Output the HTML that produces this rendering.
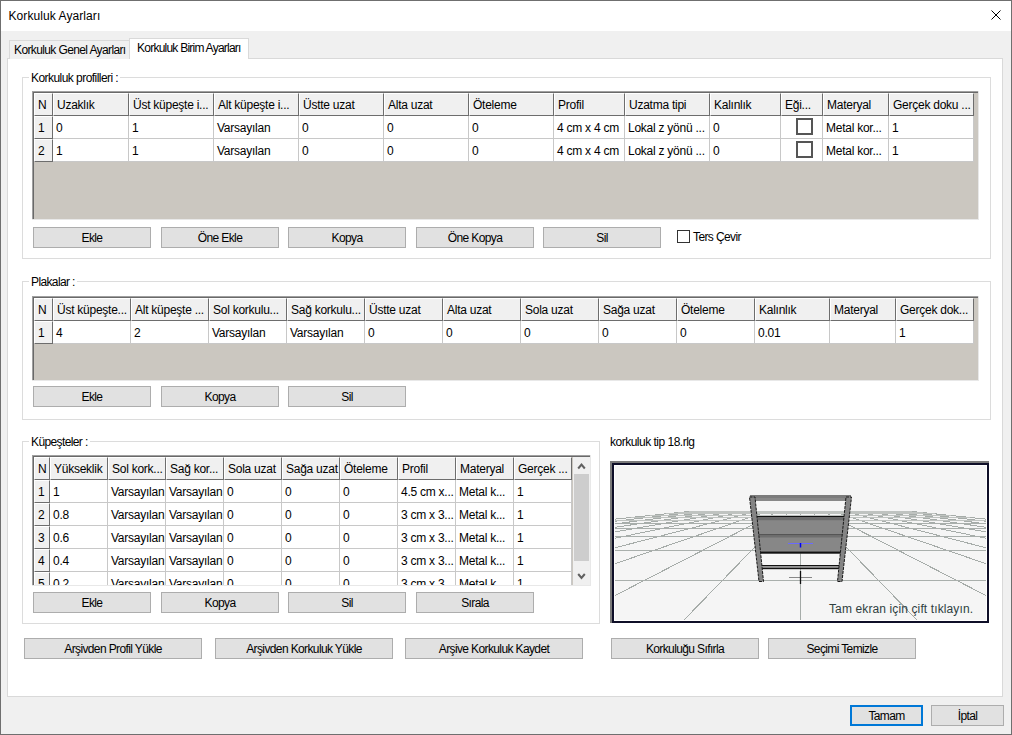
<!DOCTYPE html><html><head><meta charset="utf-8"><style>
html,body{margin:0;padding:0;}
body{width:1012px;height:735px;position:relative;overflow:hidden;background:#f0f0f0;font-family:"Liberation Sans", sans-serif;font-size:12px;color:#000;}
.r{position:absolute;}
.t,.g,.d,.v{position:absolute;white-space:nowrap;line-height:14px;font-size:12px;}
.g{letter-spacing:-0.62px;}
.d{letter-spacing:-0.25px;}
.clip{position:absolute;overflow:hidden;}
</style></head><body>
<div class="r" style="left:0px;top:0px;width:1012px;height:735px;border:1px solid #6f6f6f;box-sizing:border-box;background:#f0f0f0;"></div>
<div class="r" style="left:1px;top:1px;width:1010px;height:30px;background:#fff;"></div>
<div class="t" style="left:8.5px;top:9px;letter-spacing:0.08px;">Korkuluk Ayarları</div>
<svg class="r" style="left:986px;top:5px" width="20" height="20" viewBox="0 0 20 20"><path d="M5.5 5.5 L14.5 14.5 M14.5 5.5 L5.5 14.5" stroke="#000" stroke-width="1" fill="none"/></svg>
<div class="r" style="left:7px;top:58px;width:996px;height:639px;background:#fff;border:1px solid #d9d9d9;box-sizing:border-box;"></div>
<div class="r" style="left:9px;top:40px;width:121px;height:19px;background:#f0f0f0;border:1px solid #d9d9d9;border-bottom:none;box-sizing:border-box;"></div>
<div class="g" style="left:14px;top:43px;">Korkuluk Genel Ayarları</div>
<div class="r" style="left:129px;top:38px;width:120px;height:21px;background:#fff;border:1px solid #d9d9d9;border-bottom:none;box-sizing:border-box;"></div>
<div class="r" style="left:130px;top:58px;width:118px;height:1px;background:#fff;"></div>
<div class="g" style="left:137px;top:41px;letter-spacing:-0.76px;">Korkuluk Birim Ayarları</div>
<div class="r" style="left:22px;top:77px;width:969px;height:182px;border:1px solid #dcdcdc;box-sizing:border-box;"></div>
<div class="r" style="left:29px;top:71px;width:91px;height:13px;background:#fff;"></div>
<div class="g" style="left:31px;top:71px;letter-spacing:-0.55px;">Korkuluk profilleri :</div>
<div class="r" style="left:32px;top:91px;width:947px;height:129px;background:#cbc7c0;"></div>
<div class="r" style="left:978px;top:91px;width:1px;height:129px;background:#e8e8e8;"></div>
<div class="r" style="left:32px;top:219px;width:947px;height:1px;background:#e8e8e8;"></div>
<div class="r" style="left:32px;top:91px;width:946px;height:1px;background:#a0a0a0;"></div>
<div class="r" style="left:32px;top:91px;width:1px;height:128px;background:#a0a0a0;"></div>
<div class="r" style="left:33px;top:92px;width:945px;height:1px;background:#696969;"></div>
<div class="r" style="left:33px;top:92px;width:1px;height:127px;background:#696969;"></div>
<div class="r" style="left:34px;top:93px;width:19px;height:23px;overflow:hidden;box-sizing:border-box;background:#f0f0f0;border-left:1px solid #fff;border-top:1px solid #fff;border-right:1px solid #6d6d6d;border-bottom:1px solid #6d6d6d;"><div class="d" style="left:3px;top:4px;">N</div></div>
<div class="r" style="left:53px;top:93px;width:76px;height:23px;overflow:hidden;box-sizing:border-box;background:#f0f0f0;border-left:1px solid #fff;border-top:1px solid #fff;border-right:1px solid #6d6d6d;border-bottom:1px solid #6d6d6d;"><div class="d" style="left:3px;top:4px;">Uzaklık</div></div>
<div class="r" style="left:129px;top:93px;width:85px;height:23px;overflow:hidden;box-sizing:border-box;background:#f0f0f0;border-left:1px solid #fff;border-top:1px solid #fff;border-right:1px solid #6d6d6d;border-bottom:1px solid #6d6d6d;"><div class="d" style="left:3px;top:4px;">Üst küpeşte i...</div></div>
<div class="r" style="left:214px;top:93px;width:85px;height:23px;overflow:hidden;box-sizing:border-box;background:#f0f0f0;border-left:1px solid #fff;border-top:1px solid #fff;border-right:1px solid #6d6d6d;border-bottom:1px solid #6d6d6d;"><div class="d" style="left:3px;top:4px;">Alt küpeşte i...</div></div>
<div class="r" style="left:299px;top:93px;width:85px;height:23px;overflow:hidden;box-sizing:border-box;background:#f0f0f0;border-left:1px solid #fff;border-top:1px solid #fff;border-right:1px solid #6d6d6d;border-bottom:1px solid #6d6d6d;"><div class="d" style="left:3px;top:4px;">Üstte uzat</div></div>
<div class="r" style="left:384px;top:93px;width:85px;height:23px;overflow:hidden;box-sizing:border-box;background:#f0f0f0;border-left:1px solid #fff;border-top:1px solid #fff;border-right:1px solid #6d6d6d;border-bottom:1px solid #6d6d6d;"><div class="d" style="left:3px;top:4px;">Alta uzat</div></div>
<div class="r" style="left:469px;top:93px;width:85px;height:23px;overflow:hidden;box-sizing:border-box;background:#f0f0f0;border-left:1px solid #fff;border-top:1px solid #fff;border-right:1px solid #6d6d6d;border-bottom:1px solid #6d6d6d;"><div class="d" style="left:3px;top:4px;">Öteleme</div></div>
<div class="r" style="left:554px;top:93px;width:71px;height:23px;overflow:hidden;box-sizing:border-box;background:#f0f0f0;border-left:1px solid #fff;border-top:1px solid #fff;border-right:1px solid #6d6d6d;border-bottom:1px solid #6d6d6d;"><div class="d" style="left:3px;top:4px;">Profil</div></div>
<div class="r" style="left:625px;top:93px;width:85px;height:23px;overflow:hidden;box-sizing:border-box;background:#f0f0f0;border-left:1px solid #fff;border-top:1px solid #fff;border-right:1px solid #6d6d6d;border-bottom:1px solid #6d6d6d;"><div class="d" style="left:3px;top:4px;">Uzatma tipi</div></div>
<div class="r" style="left:710px;top:93px;width:71px;height:23px;overflow:hidden;box-sizing:border-box;background:#f0f0f0;border-left:1px solid #fff;border-top:1px solid #fff;border-right:1px solid #6d6d6d;border-bottom:1px solid #6d6d6d;"><div class="d" style="left:3px;top:4px;">Kalınlık</div></div>
<div class="r" style="left:781px;top:93px;width:42px;height:23px;overflow:hidden;box-sizing:border-box;background:#f0f0f0;border-left:1px solid #fff;border-top:1px solid #fff;border-right:1px solid #6d6d6d;border-bottom:1px solid #6d6d6d;"><div class="d" style="left:3px;top:4px;">Eği...</div></div>
<div class="r" style="left:823px;top:93px;width:66px;height:23px;overflow:hidden;box-sizing:border-box;background:#f0f0f0;border-left:1px solid #fff;border-top:1px solid #fff;border-right:1px solid #6d6d6d;border-bottom:1px solid #6d6d6d;"><div class="d" style="left:3px;top:4px;">Materyal</div></div>
<div class="r" style="left:889px;top:93px;width:85px;height:23px;overflow:hidden;box-sizing:border-box;background:#f0f0f0;border-left:1px solid #fff;border-top:1px solid #fff;border-right:1px solid #6d6d6d;border-bottom:1px solid #6d6d6d;"><div class="d" style="left:3px;top:4px;">Gerçek doku ...</div></div>
<div class="r" style="left:34px;top:116px;width:19px;height:23px;overflow:hidden;box-sizing:border-box;background:#f0f0f0;border-left:1px solid #fff;border-top:1px solid #fff;border-right:1px solid #6d6d6d;border-bottom:1px solid #6d6d6d;"><div class="d" style="left:3px;top:4px;">1</div></div>
<div class="r" style="left:53px;top:116px;width:76px;height:23px;overflow:hidden;box-sizing:border-box;background:#fff;border-right:1px solid #c8c8c8;border-bottom:1px solid #c8c8c8;"><div class="d" style="left:3px;top:5px;">0</div></div>
<div class="r" style="left:129px;top:116px;width:85px;height:23px;overflow:hidden;box-sizing:border-box;background:#fff;border-right:1px solid #c8c8c8;border-bottom:1px solid #c8c8c8;"><div class="d" style="left:3px;top:5px;">1</div></div>
<div class="r" style="left:214px;top:116px;width:85px;height:23px;overflow:hidden;box-sizing:border-box;background:#fff;border-right:1px solid #c8c8c8;border-bottom:1px solid #c8c8c8;"><div class="d" style="left:3px;top:5px;">Varsayılan</div></div>
<div class="r" style="left:299px;top:116px;width:85px;height:23px;overflow:hidden;box-sizing:border-box;background:#fff;border-right:1px solid #c8c8c8;border-bottom:1px solid #c8c8c8;"><div class="d" style="left:3px;top:5px;">0</div></div>
<div class="r" style="left:384px;top:116px;width:85px;height:23px;overflow:hidden;box-sizing:border-box;background:#fff;border-right:1px solid #c8c8c8;border-bottom:1px solid #c8c8c8;"><div class="d" style="left:3px;top:5px;">0</div></div>
<div class="r" style="left:469px;top:116px;width:85px;height:23px;overflow:hidden;box-sizing:border-box;background:#fff;border-right:1px solid #c8c8c8;border-bottom:1px solid #c8c8c8;"><div class="d" style="left:3px;top:5px;">0</div></div>
<div class="r" style="left:554px;top:116px;width:71px;height:23px;overflow:hidden;box-sizing:border-box;background:#fff;border-right:1px solid #c8c8c8;border-bottom:1px solid #c8c8c8;"><div class="d" style="left:3px;top:5px;">4 cm x 4 cm</div></div>
<div class="r" style="left:625px;top:116px;width:85px;height:23px;overflow:hidden;box-sizing:border-box;background:#fff;border-right:1px solid #c8c8c8;border-bottom:1px solid #c8c8c8;"><div class="d" style="left:3px;top:5px;">Lokal z yönü ...</div></div>
<div class="r" style="left:710px;top:116px;width:71px;height:23px;overflow:hidden;box-sizing:border-box;background:#fff;border-right:1px solid #c8c8c8;border-bottom:1px solid #c8c8c8;"><div class="d" style="left:3px;top:5px;">0</div></div>
<div class="r" style="left:781px;top:116px;width:42px;height:23px;overflow:hidden;box-sizing:border-box;background:#fff;border-right:1px solid #c8c8c8;border-bottom:1px solid #c8c8c8;"><div class="r" style="left:15px;top:2px;width:17px;height:17px;border:2px solid #555;box-sizing:border-box;background:#fff;"></div></div>
<div class="r" style="left:823px;top:116px;width:66px;height:23px;overflow:hidden;box-sizing:border-box;background:#fff;border-right:1px solid #c8c8c8;border-bottom:1px solid #c8c8c8;"><div class="d" style="left:3px;top:5px;">Metal kor...</div></div>
<div class="r" style="left:889px;top:116px;width:85px;height:23px;overflow:hidden;box-sizing:border-box;background:#fff;border-right:1px solid #c8c8c8;border-bottom:1px solid #c8c8c8;"><div class="d" style="left:3px;top:5px;">1</div></div>
<div class="r" style="left:34px;top:139px;width:19px;height:23px;overflow:hidden;box-sizing:border-box;background:#f0f0f0;border-left:1px solid #fff;border-top:1px solid #fff;border-right:1px solid #6d6d6d;border-bottom:1px solid #6d6d6d;"><div class="d" style="left:3px;top:4px;">2</div></div>
<div class="r" style="left:53px;top:139px;width:76px;height:23px;overflow:hidden;box-sizing:border-box;background:#fff;border-right:1px solid #c8c8c8;border-bottom:1px solid #c8c8c8;"><div class="d" style="left:3px;top:5px;">1</div></div>
<div class="r" style="left:129px;top:139px;width:85px;height:23px;overflow:hidden;box-sizing:border-box;background:#fff;border-right:1px solid #c8c8c8;border-bottom:1px solid #c8c8c8;"><div class="d" style="left:3px;top:5px;">1</div></div>
<div class="r" style="left:214px;top:139px;width:85px;height:23px;overflow:hidden;box-sizing:border-box;background:#fff;border-right:1px solid #c8c8c8;border-bottom:1px solid #c8c8c8;"><div class="d" style="left:3px;top:5px;">Varsayılan</div></div>
<div class="r" style="left:299px;top:139px;width:85px;height:23px;overflow:hidden;box-sizing:border-box;background:#fff;border-right:1px solid #c8c8c8;border-bottom:1px solid #c8c8c8;"><div class="d" style="left:3px;top:5px;">0</div></div>
<div class="r" style="left:384px;top:139px;width:85px;height:23px;overflow:hidden;box-sizing:border-box;background:#fff;border-right:1px solid #c8c8c8;border-bottom:1px solid #c8c8c8;"><div class="d" style="left:3px;top:5px;">0</div></div>
<div class="r" style="left:469px;top:139px;width:85px;height:23px;overflow:hidden;box-sizing:border-box;background:#fff;border-right:1px solid #c8c8c8;border-bottom:1px solid #c8c8c8;"><div class="d" style="left:3px;top:5px;">0</div></div>
<div class="r" style="left:554px;top:139px;width:71px;height:23px;overflow:hidden;box-sizing:border-box;background:#fff;border-right:1px solid #c8c8c8;border-bottom:1px solid #c8c8c8;"><div class="d" style="left:3px;top:5px;">4 cm x 4 cm</div></div>
<div class="r" style="left:625px;top:139px;width:85px;height:23px;overflow:hidden;box-sizing:border-box;background:#fff;border-right:1px solid #c8c8c8;border-bottom:1px solid #c8c8c8;"><div class="d" style="left:3px;top:5px;">Lokal z yönü ...</div></div>
<div class="r" style="left:710px;top:139px;width:71px;height:23px;overflow:hidden;box-sizing:border-box;background:#fff;border-right:1px solid #c8c8c8;border-bottom:1px solid #c8c8c8;"><div class="d" style="left:3px;top:5px;">0</div></div>
<div class="r" style="left:781px;top:139px;width:42px;height:23px;overflow:hidden;box-sizing:border-box;background:#fff;border-right:1px solid #c8c8c8;border-bottom:1px solid #c8c8c8;"><div class="r" style="left:15px;top:2px;width:17px;height:17px;border:2px solid #555;box-sizing:border-box;background:#fff;"></div></div>
<div class="r" style="left:823px;top:139px;width:66px;height:23px;overflow:hidden;box-sizing:border-box;background:#fff;border-right:1px solid #c8c8c8;border-bottom:1px solid #c8c8c8;"><div class="d" style="left:3px;top:5px;">Metal kor...</div></div>
<div class="r" style="left:889px;top:139px;width:85px;height:23px;overflow:hidden;box-sizing:border-box;background:#fff;border-right:1px solid #c8c8c8;border-bottom:1px solid #c8c8c8;"><div class="d" style="left:3px;top:5px;">1</div></div>
<div class="r" style="left:33px;top:227px;width:118px;height:21px;background:#e1e1e1;border:1px solid #adadad;box-sizing:border-box;"></div>
<div class="g" style="left:33px;width:118px;text-align:center;top:231px;">Ekle</div>
<div class="r" style="left:161px;top:227px;width:118px;height:21px;background:#e1e1e1;border:1px solid #adadad;box-sizing:border-box;"></div>
<div class="g" style="left:161px;width:118px;text-align:center;top:231px;">Öne Ekle</div>
<div class="r" style="left:288px;top:227px;width:118px;height:21px;background:#e1e1e1;border:1px solid #adadad;box-sizing:border-box;"></div>
<div class="g" style="left:288px;width:118px;text-align:center;top:231px;">Kopya</div>
<div class="r" style="left:416px;top:227px;width:118px;height:21px;background:#e1e1e1;border:1px solid #adadad;box-sizing:border-box;"></div>
<div class="g" style="left:416px;width:118px;text-align:center;top:231px;">Öne Kopya</div>
<div class="r" style="left:543px;top:227px;width:118px;height:21px;background:#e1e1e1;border:1px solid #adadad;box-sizing:border-box;"></div>
<div class="g" style="left:543px;width:118px;text-align:center;top:231px;">Sil</div>
<div class="r" style="left:677px;top:230px;width:13px;height:13px;border:1px solid #333;box-sizing:border-box;background:#fff;"></div>
<div class="g" style="left:693px;top:230px;">Ters Çevir</div>
<div class="r" style="left:22px;top:281px;width:969px;height:139px;border:1px solid #dcdcdc;box-sizing:border-box;"></div>
<div class="r" style="left:29px;top:275px;width:48px;height:13px;background:#fff;"></div>
<div class="g" style="left:31px;top:275px;">Plakalar :</div>
<div class="r" style="left:32px;top:296px;width:947px;height:85px;background:#cbc7c0;"></div>
<div class="r" style="left:978px;top:296px;width:1px;height:85px;background:#e8e8e8;"></div>
<div class="r" style="left:32px;top:380px;width:947px;height:1px;background:#e8e8e8;"></div>
<div class="r" style="left:32px;top:296px;width:946px;height:1px;background:#a0a0a0;"></div>
<div class="r" style="left:32px;top:296px;width:1px;height:84px;background:#a0a0a0;"></div>
<div class="r" style="left:33px;top:297px;width:945px;height:1px;background:#696969;"></div>
<div class="r" style="left:33px;top:297px;width:1px;height:83px;background:#696969;"></div>
<div class="r" style="left:34px;top:298px;width:19px;height:23px;overflow:hidden;box-sizing:border-box;background:#f0f0f0;border-left:1px solid #fff;border-top:1px solid #fff;border-right:1px solid #6d6d6d;border-bottom:1px solid #6d6d6d;"><div class="d" style="left:3px;top:4px;">N</div></div>
<div class="r" style="left:53px;top:298px;width:78px;height:23px;overflow:hidden;box-sizing:border-box;background:#f0f0f0;border-left:1px solid #fff;border-top:1px solid #fff;border-right:1px solid #6d6d6d;border-bottom:1px solid #6d6d6d;"><div class="d" style="left:3px;top:4px;">Üst küpeşte...</div></div>
<div class="r" style="left:131px;top:298px;width:78px;height:23px;overflow:hidden;box-sizing:border-box;background:#f0f0f0;border-left:1px solid #fff;border-top:1px solid #fff;border-right:1px solid #6d6d6d;border-bottom:1px solid #6d6d6d;"><div class="d" style="left:3px;top:4px;">Alt küpeşte ...</div></div>
<div class="r" style="left:209px;top:298px;width:78px;height:23px;overflow:hidden;box-sizing:border-box;background:#f0f0f0;border-left:1px solid #fff;border-top:1px solid #fff;border-right:1px solid #6d6d6d;border-bottom:1px solid #6d6d6d;"><div class="d" style="left:3px;top:4px;">Sol korkulu...</div></div>
<div class="r" style="left:287px;top:298px;width:78px;height:23px;overflow:hidden;box-sizing:border-box;background:#f0f0f0;border-left:1px solid #fff;border-top:1px solid #fff;border-right:1px solid #6d6d6d;border-bottom:1px solid #6d6d6d;"><div class="d" style="left:3px;top:4px;">Sağ korkulu...</div></div>
<div class="r" style="left:365px;top:298px;width:78px;height:23px;overflow:hidden;box-sizing:border-box;background:#f0f0f0;border-left:1px solid #fff;border-top:1px solid #fff;border-right:1px solid #6d6d6d;border-bottom:1px solid #6d6d6d;"><div class="d" style="left:3px;top:4px;">Üstte uzat</div></div>
<div class="r" style="left:443px;top:298px;width:78px;height:23px;overflow:hidden;box-sizing:border-box;background:#f0f0f0;border-left:1px solid #fff;border-top:1px solid #fff;border-right:1px solid #6d6d6d;border-bottom:1px solid #6d6d6d;"><div class="d" style="left:3px;top:4px;">Alta uzat</div></div>
<div class="r" style="left:521px;top:298px;width:78px;height:23px;overflow:hidden;box-sizing:border-box;background:#f0f0f0;border-left:1px solid #fff;border-top:1px solid #fff;border-right:1px solid #6d6d6d;border-bottom:1px solid #6d6d6d;"><div class="d" style="left:3px;top:4px;">Sola uzat</div></div>
<div class="r" style="left:599px;top:298px;width:78px;height:23px;overflow:hidden;box-sizing:border-box;background:#f0f0f0;border-left:1px solid #fff;border-top:1px solid #fff;border-right:1px solid #6d6d6d;border-bottom:1px solid #6d6d6d;"><div class="d" style="left:3px;top:4px;">Sağa uzat</div></div>
<div class="r" style="left:677px;top:298px;width:78px;height:23px;overflow:hidden;box-sizing:border-box;background:#f0f0f0;border-left:1px solid #fff;border-top:1px solid #fff;border-right:1px solid #6d6d6d;border-bottom:1px solid #6d6d6d;"><div class="d" style="left:3px;top:4px;">Öteleme</div></div>
<div class="r" style="left:755px;top:298px;width:75px;height:23px;overflow:hidden;box-sizing:border-box;background:#f0f0f0;border-left:1px solid #fff;border-top:1px solid #fff;border-right:1px solid #6d6d6d;border-bottom:1px solid #6d6d6d;"><div class="d" style="left:3px;top:4px;">Kalınlık</div></div>
<div class="r" style="left:830px;top:298px;width:66px;height:23px;overflow:hidden;box-sizing:border-box;background:#f0f0f0;border-left:1px solid #fff;border-top:1px solid #fff;border-right:1px solid #6d6d6d;border-bottom:1px solid #6d6d6d;"><div class="d" style="left:3px;top:4px;">Materyal</div></div>
<div class="r" style="left:896px;top:298px;width:78px;height:23px;overflow:hidden;box-sizing:border-box;background:#f0f0f0;border-left:1px solid #fff;border-top:1px solid #fff;border-right:1px solid #6d6d6d;border-bottom:1px solid #6d6d6d;"><div class="d" style="left:3px;top:4px;">Gerçek dok...</div></div>
<div class="r" style="left:34px;top:321px;width:19px;height:23px;overflow:hidden;box-sizing:border-box;background:#f0f0f0;border-left:1px solid #fff;border-top:1px solid #fff;border-right:1px solid #6d6d6d;border-bottom:1px solid #6d6d6d;"><div class="d" style="left:3px;top:4px;">1</div></div>
<div class="r" style="left:53px;top:321px;width:78px;height:23px;overflow:hidden;box-sizing:border-box;background:#fff;border-right:1px solid #c8c8c8;border-bottom:1px solid #c8c8c8;"><div class="d" style="left:3px;top:5px;">4</div></div>
<div class="r" style="left:131px;top:321px;width:78px;height:23px;overflow:hidden;box-sizing:border-box;background:#fff;border-right:1px solid #c8c8c8;border-bottom:1px solid #c8c8c8;"><div class="d" style="left:3px;top:5px;">2</div></div>
<div class="r" style="left:209px;top:321px;width:78px;height:23px;overflow:hidden;box-sizing:border-box;background:#fff;border-right:1px solid #c8c8c8;border-bottom:1px solid #c8c8c8;"><div class="d" style="left:3px;top:5px;">Varsayılan</div></div>
<div class="r" style="left:287px;top:321px;width:78px;height:23px;overflow:hidden;box-sizing:border-box;background:#fff;border-right:1px solid #c8c8c8;border-bottom:1px solid #c8c8c8;"><div class="d" style="left:3px;top:5px;">Varsayılan</div></div>
<div class="r" style="left:365px;top:321px;width:78px;height:23px;overflow:hidden;box-sizing:border-box;background:#fff;border-right:1px solid #c8c8c8;border-bottom:1px solid #c8c8c8;"><div class="d" style="left:3px;top:5px;">0</div></div>
<div class="r" style="left:443px;top:321px;width:78px;height:23px;overflow:hidden;box-sizing:border-box;background:#fff;border-right:1px solid #c8c8c8;border-bottom:1px solid #c8c8c8;"><div class="d" style="left:3px;top:5px;">0</div></div>
<div class="r" style="left:521px;top:321px;width:78px;height:23px;overflow:hidden;box-sizing:border-box;background:#fff;border-right:1px solid #c8c8c8;border-bottom:1px solid #c8c8c8;"><div class="d" style="left:3px;top:5px;">0</div></div>
<div class="r" style="left:599px;top:321px;width:78px;height:23px;overflow:hidden;box-sizing:border-box;background:#fff;border-right:1px solid #c8c8c8;border-bottom:1px solid #c8c8c8;"><div class="d" style="left:3px;top:5px;">0</div></div>
<div class="r" style="left:677px;top:321px;width:78px;height:23px;overflow:hidden;box-sizing:border-box;background:#fff;border-right:1px solid #c8c8c8;border-bottom:1px solid #c8c8c8;"><div class="d" style="left:3px;top:5px;">0</div></div>
<div class="r" style="left:755px;top:321px;width:75px;height:23px;overflow:hidden;box-sizing:border-box;background:#fff;border-right:1px solid #c8c8c8;border-bottom:1px solid #c8c8c8;"><div class="d" style="left:3px;top:5px;">0.01</div></div>
<div class="r" style="left:830px;top:321px;width:66px;height:23px;overflow:hidden;box-sizing:border-box;background:#fff;border-right:1px solid #c8c8c8;border-bottom:1px solid #c8c8c8;"></div>
<div class="r" style="left:896px;top:321px;width:78px;height:23px;overflow:hidden;box-sizing:border-box;background:#fff;border-right:1px solid #c8c8c8;border-bottom:1px solid #c8c8c8;"><div class="d" style="left:3px;top:5px;">1</div></div>
<div class="r" style="left:33px;top:386px;width:118px;height:21px;background:#e1e1e1;border:1px solid #adadad;box-sizing:border-box;"></div>
<div class="g" style="left:33px;width:118px;text-align:center;top:390px;">Ekle</div>
<div class="r" style="left:161px;top:386px;width:118px;height:21px;background:#e1e1e1;border:1px solid #adadad;box-sizing:border-box;"></div>
<div class="g" style="left:161px;width:118px;text-align:center;top:390px;">Kopya</div>
<div class="r" style="left:288px;top:386px;width:118px;height:21px;background:#e1e1e1;border:1px solid #adadad;box-sizing:border-box;"></div>
<div class="g" style="left:288px;width:118px;text-align:center;top:390px;">Sil</div>
<div class="r" style="left:22px;top:441px;width:578px;height:183px;border:1px solid #dcdcdc;box-sizing:border-box;"></div>
<div class="r" style="left:29px;top:435px;width:61px;height:13px;background:#fff;"></div>
<div class="g" style="left:31px;top:435px;">Küpeşteler :</div>
<div class="r" style="left:32px;top:455px;width:559px;height:131px;background:#cbc7c0;"></div>
<div class="r" style="left:590px;top:455px;width:1px;height:131px;background:#e8e8e8;"></div>
<div class="r" style="left:32px;top:585px;width:559px;height:1px;background:#e8e8e8;"></div>
<div class="r" style="left:32px;top:455px;width:558px;height:1px;background:#a0a0a0;"></div>
<div class="r" style="left:32px;top:455px;width:1px;height:130px;background:#a0a0a0;"></div>
<div class="r" style="left:33px;top:456px;width:557px;height:1px;background:#696969;"></div>
<div class="r" style="left:33px;top:456px;width:1px;height:129px;background:#696969;"></div>
<div class="r" style="left:34px;top:457px;width:16px;height:23px;overflow:hidden;box-sizing:border-box;background:#f0f0f0;border-left:1px solid #fff;border-top:1px solid #fff;border-right:1px solid #6d6d6d;border-bottom:1px solid #6d6d6d;"><div class="d" style="left:3px;top:4px;">N</div></div>
<div class="r" style="left:50px;top:457px;width:58px;height:23px;overflow:hidden;box-sizing:border-box;background:#f0f0f0;border-left:1px solid #fff;border-top:1px solid #fff;border-right:1px solid #6d6d6d;border-bottom:1px solid #6d6d6d;"><div class="d" style="left:3px;top:4px;">Yükseklik</div></div>
<div class="r" style="left:108px;top:457px;width:58px;height:23px;overflow:hidden;box-sizing:border-box;background:#f0f0f0;border-left:1px solid #fff;border-top:1px solid #fff;border-right:1px solid #6d6d6d;border-bottom:1px solid #6d6d6d;"><div class="d" style="left:3px;top:4px;">Sol kork...</div></div>
<div class="r" style="left:166px;top:457px;width:58px;height:23px;overflow:hidden;box-sizing:border-box;background:#f0f0f0;border-left:1px solid #fff;border-top:1px solid #fff;border-right:1px solid #6d6d6d;border-bottom:1px solid #6d6d6d;"><div class="d" style="left:3px;top:4px;">Sağ kor...</div></div>
<div class="r" style="left:224px;top:457px;width:58px;height:23px;overflow:hidden;box-sizing:border-box;background:#f0f0f0;border-left:1px solid #fff;border-top:1px solid #fff;border-right:1px solid #6d6d6d;border-bottom:1px solid #6d6d6d;"><div class="d" style="left:3px;top:4px;">Sola uzat</div></div>
<div class="r" style="left:282px;top:457px;width:58px;height:23px;overflow:hidden;box-sizing:border-box;background:#f0f0f0;border-left:1px solid #fff;border-top:1px solid #fff;border-right:1px solid #6d6d6d;border-bottom:1px solid #6d6d6d;"><div class="d" style="left:3px;top:4px;">Sağa uzat</div></div>
<div class="r" style="left:340px;top:457px;width:58px;height:23px;overflow:hidden;box-sizing:border-box;background:#f0f0f0;border-left:1px solid #fff;border-top:1px solid #fff;border-right:1px solid #6d6d6d;border-bottom:1px solid #6d6d6d;"><div class="d" style="left:3px;top:4px;">Öteleme</div></div>
<div class="r" style="left:398px;top:457px;width:58px;height:23px;overflow:hidden;box-sizing:border-box;background:#f0f0f0;border-left:1px solid #fff;border-top:1px solid #fff;border-right:1px solid #6d6d6d;border-bottom:1px solid #6d6d6d;"><div class="d" style="left:3px;top:4px;">Profil</div></div>
<div class="r" style="left:456px;top:457px;width:58px;height:23px;overflow:hidden;box-sizing:border-box;background:#f0f0f0;border-left:1px solid #fff;border-top:1px solid #fff;border-right:1px solid #6d6d6d;border-bottom:1px solid #6d6d6d;"><div class="d" style="left:3px;top:4px;">Materyal</div></div>
<div class="r" style="left:514px;top:457px;width:58px;height:23px;overflow:hidden;box-sizing:border-box;background:#f0f0f0;border-left:1px solid #fff;border-top:1px solid #fff;border-right:1px solid #6d6d6d;border-bottom:1px solid #6d6d6d;"><div class="d" style="left:3px;top:4px;">Gerçek ...</div></div>
<div class="r" style="left:34px;top:480px;width:16px;height:23px;overflow:hidden;box-sizing:border-box;background:#f0f0f0;border-left:1px solid #fff;border-top:1px solid #fff;border-right:1px solid #6d6d6d;border-bottom:1px solid #6d6d6d;"><div class="d" style="left:3px;top:4px;">1</div></div>
<div class="r" style="left:50px;top:480px;width:58px;height:23px;overflow:hidden;box-sizing:border-box;background:#fff;border-right:1px solid #c8c8c8;border-bottom:1px solid #c8c8c8;"><div class="d" style="left:3px;top:5px;">1</div></div>
<div class="r" style="left:108px;top:480px;width:58px;height:23px;overflow:hidden;box-sizing:border-box;background:#fff;border-right:1px solid #c8c8c8;border-bottom:1px solid #c8c8c8;"><div class="d" style="left:3px;top:5px;">Varsayılan</div></div>
<div class="r" style="left:166px;top:480px;width:58px;height:23px;overflow:hidden;box-sizing:border-box;background:#fff;border-right:1px solid #c8c8c8;border-bottom:1px solid #c8c8c8;"><div class="d" style="left:3px;top:5px;">Varsayılan</div></div>
<div class="r" style="left:224px;top:480px;width:58px;height:23px;overflow:hidden;box-sizing:border-box;background:#fff;border-right:1px solid #c8c8c8;border-bottom:1px solid #c8c8c8;"><div class="d" style="left:3px;top:5px;">0</div></div>
<div class="r" style="left:282px;top:480px;width:58px;height:23px;overflow:hidden;box-sizing:border-box;background:#fff;border-right:1px solid #c8c8c8;border-bottom:1px solid #c8c8c8;"><div class="d" style="left:3px;top:5px;">0</div></div>
<div class="r" style="left:340px;top:480px;width:58px;height:23px;overflow:hidden;box-sizing:border-box;background:#fff;border-right:1px solid #c8c8c8;border-bottom:1px solid #c8c8c8;"><div class="d" style="left:3px;top:5px;">0</div></div>
<div class="r" style="left:398px;top:480px;width:58px;height:23px;overflow:hidden;box-sizing:border-box;background:#fff;border-right:1px solid #c8c8c8;border-bottom:1px solid #c8c8c8;"><div class="d" style="left:3px;top:5px;">4.5 cm x...</div></div>
<div class="r" style="left:456px;top:480px;width:58px;height:23px;overflow:hidden;box-sizing:border-box;background:#fff;border-right:1px solid #c8c8c8;border-bottom:1px solid #c8c8c8;"><div class="d" style="left:3px;top:5px;">Metal k...</div></div>
<div class="r" style="left:514px;top:480px;width:58px;height:23px;overflow:hidden;box-sizing:border-box;background:#fff;border-right:1px solid #c8c8c8;border-bottom:1px solid #c8c8c8;"><div class="d" style="left:3px;top:5px;">1</div></div>
<div class="r" style="left:34px;top:503px;width:16px;height:23px;overflow:hidden;box-sizing:border-box;background:#f0f0f0;border-left:1px solid #fff;border-top:1px solid #fff;border-right:1px solid #6d6d6d;border-bottom:1px solid #6d6d6d;"><div class="d" style="left:3px;top:4px;">2</div></div>
<div class="r" style="left:50px;top:503px;width:58px;height:23px;overflow:hidden;box-sizing:border-box;background:#fff;border-right:1px solid #c8c8c8;border-bottom:1px solid #c8c8c8;"><div class="d" style="left:3px;top:5px;">0.8</div></div>
<div class="r" style="left:108px;top:503px;width:58px;height:23px;overflow:hidden;box-sizing:border-box;background:#fff;border-right:1px solid #c8c8c8;border-bottom:1px solid #c8c8c8;"><div class="d" style="left:3px;top:5px;">Varsayılan</div></div>
<div class="r" style="left:166px;top:503px;width:58px;height:23px;overflow:hidden;box-sizing:border-box;background:#fff;border-right:1px solid #c8c8c8;border-bottom:1px solid #c8c8c8;"><div class="d" style="left:3px;top:5px;">Varsayılan</div></div>
<div class="r" style="left:224px;top:503px;width:58px;height:23px;overflow:hidden;box-sizing:border-box;background:#fff;border-right:1px solid #c8c8c8;border-bottom:1px solid #c8c8c8;"><div class="d" style="left:3px;top:5px;">0</div></div>
<div class="r" style="left:282px;top:503px;width:58px;height:23px;overflow:hidden;box-sizing:border-box;background:#fff;border-right:1px solid #c8c8c8;border-bottom:1px solid #c8c8c8;"><div class="d" style="left:3px;top:5px;">0</div></div>
<div class="r" style="left:340px;top:503px;width:58px;height:23px;overflow:hidden;box-sizing:border-box;background:#fff;border-right:1px solid #c8c8c8;border-bottom:1px solid #c8c8c8;"><div class="d" style="left:3px;top:5px;">0</div></div>
<div class="r" style="left:398px;top:503px;width:58px;height:23px;overflow:hidden;box-sizing:border-box;background:#fff;border-right:1px solid #c8c8c8;border-bottom:1px solid #c8c8c8;"><div class="d" style="left:3px;top:5px;">3 cm x 3...</div></div>
<div class="r" style="left:456px;top:503px;width:58px;height:23px;overflow:hidden;box-sizing:border-box;background:#fff;border-right:1px solid #c8c8c8;border-bottom:1px solid #c8c8c8;"><div class="d" style="left:3px;top:5px;">Metal k...</div></div>
<div class="r" style="left:514px;top:503px;width:58px;height:23px;overflow:hidden;box-sizing:border-box;background:#fff;border-right:1px solid #c8c8c8;border-bottom:1px solid #c8c8c8;"><div class="d" style="left:3px;top:5px;">1</div></div>
<div class="r" style="left:34px;top:526px;width:16px;height:23px;overflow:hidden;box-sizing:border-box;background:#f0f0f0;border-left:1px solid #fff;border-top:1px solid #fff;border-right:1px solid #6d6d6d;border-bottom:1px solid #6d6d6d;"><div class="d" style="left:3px;top:4px;">3</div></div>
<div class="r" style="left:50px;top:526px;width:58px;height:23px;overflow:hidden;box-sizing:border-box;background:#fff;border-right:1px solid #c8c8c8;border-bottom:1px solid #c8c8c8;"><div class="d" style="left:3px;top:5px;">0.6</div></div>
<div class="r" style="left:108px;top:526px;width:58px;height:23px;overflow:hidden;box-sizing:border-box;background:#fff;border-right:1px solid #c8c8c8;border-bottom:1px solid #c8c8c8;"><div class="d" style="left:3px;top:5px;">Varsayılan</div></div>
<div class="r" style="left:166px;top:526px;width:58px;height:23px;overflow:hidden;box-sizing:border-box;background:#fff;border-right:1px solid #c8c8c8;border-bottom:1px solid #c8c8c8;"><div class="d" style="left:3px;top:5px;">Varsayılan</div></div>
<div class="r" style="left:224px;top:526px;width:58px;height:23px;overflow:hidden;box-sizing:border-box;background:#fff;border-right:1px solid #c8c8c8;border-bottom:1px solid #c8c8c8;"><div class="d" style="left:3px;top:5px;">0</div></div>
<div class="r" style="left:282px;top:526px;width:58px;height:23px;overflow:hidden;box-sizing:border-box;background:#fff;border-right:1px solid #c8c8c8;border-bottom:1px solid #c8c8c8;"><div class="d" style="left:3px;top:5px;">0</div></div>
<div class="r" style="left:340px;top:526px;width:58px;height:23px;overflow:hidden;box-sizing:border-box;background:#fff;border-right:1px solid #c8c8c8;border-bottom:1px solid #c8c8c8;"><div class="d" style="left:3px;top:5px;">0</div></div>
<div class="r" style="left:398px;top:526px;width:58px;height:23px;overflow:hidden;box-sizing:border-box;background:#fff;border-right:1px solid #c8c8c8;border-bottom:1px solid #c8c8c8;"><div class="d" style="left:3px;top:5px;">3 cm x 3...</div></div>
<div class="r" style="left:456px;top:526px;width:58px;height:23px;overflow:hidden;box-sizing:border-box;background:#fff;border-right:1px solid #c8c8c8;border-bottom:1px solid #c8c8c8;"><div class="d" style="left:3px;top:5px;">Metal k...</div></div>
<div class="r" style="left:514px;top:526px;width:58px;height:23px;overflow:hidden;box-sizing:border-box;background:#fff;border-right:1px solid #c8c8c8;border-bottom:1px solid #c8c8c8;"><div class="d" style="left:3px;top:5px;">1</div></div>
<div class="r" style="left:34px;top:549px;width:16px;height:23px;overflow:hidden;box-sizing:border-box;background:#f0f0f0;border-left:1px solid #fff;border-top:1px solid #fff;border-right:1px solid #6d6d6d;border-bottom:1px solid #6d6d6d;"><div class="d" style="left:3px;top:4px;">4</div></div>
<div class="r" style="left:50px;top:549px;width:58px;height:23px;overflow:hidden;box-sizing:border-box;background:#fff;border-right:1px solid #c8c8c8;border-bottom:1px solid #c8c8c8;"><div class="d" style="left:3px;top:5px;">0.4</div></div>
<div class="r" style="left:108px;top:549px;width:58px;height:23px;overflow:hidden;box-sizing:border-box;background:#fff;border-right:1px solid #c8c8c8;border-bottom:1px solid #c8c8c8;"><div class="d" style="left:3px;top:5px;">Varsayılan</div></div>
<div class="r" style="left:166px;top:549px;width:58px;height:23px;overflow:hidden;box-sizing:border-box;background:#fff;border-right:1px solid #c8c8c8;border-bottom:1px solid #c8c8c8;"><div class="d" style="left:3px;top:5px;">Varsayılan</div></div>
<div class="r" style="left:224px;top:549px;width:58px;height:23px;overflow:hidden;box-sizing:border-box;background:#fff;border-right:1px solid #c8c8c8;border-bottom:1px solid #c8c8c8;"><div class="d" style="left:3px;top:5px;">0</div></div>
<div class="r" style="left:282px;top:549px;width:58px;height:23px;overflow:hidden;box-sizing:border-box;background:#fff;border-right:1px solid #c8c8c8;border-bottom:1px solid #c8c8c8;"><div class="d" style="left:3px;top:5px;">0</div></div>
<div class="r" style="left:340px;top:549px;width:58px;height:23px;overflow:hidden;box-sizing:border-box;background:#fff;border-right:1px solid #c8c8c8;border-bottom:1px solid #c8c8c8;"><div class="d" style="left:3px;top:5px;">0</div></div>
<div class="r" style="left:398px;top:549px;width:58px;height:23px;overflow:hidden;box-sizing:border-box;background:#fff;border-right:1px solid #c8c8c8;border-bottom:1px solid #c8c8c8;"><div class="d" style="left:3px;top:5px;">3 cm x 3...</div></div>
<div class="r" style="left:456px;top:549px;width:58px;height:23px;overflow:hidden;box-sizing:border-box;background:#fff;border-right:1px solid #c8c8c8;border-bottom:1px solid #c8c8c8;"><div class="d" style="left:3px;top:5px;">Metal k...</div></div>
<div class="r" style="left:514px;top:549px;width:58px;height:23px;overflow:hidden;box-sizing:border-box;background:#fff;border-right:1px solid #c8c8c8;border-bottom:1px solid #c8c8c8;"><div class="d" style="left:3px;top:5px;">1</div></div>
<div class="r" style="left:34px;top:572px;width:16px;height:13px;overflow:hidden;box-sizing:border-box;background:#f0f0f0;border-left:1px solid #fff;border-top:1px solid #fff;border-right:1px solid #6d6d6d;"><div class="d" style="left:3px;top:4px;">5</div></div>
<div class="r" style="left:50px;top:572px;width:58px;height:13px;overflow:hidden;box-sizing:border-box;background:#fff;border-right:1px solid #c8c8c8;"><div class="d" style="left:3px;top:5px;">0.2</div></div>
<div class="r" style="left:108px;top:572px;width:58px;height:13px;overflow:hidden;box-sizing:border-box;background:#fff;border-right:1px solid #c8c8c8;"><div class="d" style="left:3px;top:5px;">Varsayılan</div></div>
<div class="r" style="left:166px;top:572px;width:58px;height:13px;overflow:hidden;box-sizing:border-box;background:#fff;border-right:1px solid #c8c8c8;"><div class="d" style="left:3px;top:5px;">Varsayılan</div></div>
<div class="r" style="left:224px;top:572px;width:58px;height:13px;overflow:hidden;box-sizing:border-box;background:#fff;border-right:1px solid #c8c8c8;"><div class="d" style="left:3px;top:5px;">0</div></div>
<div class="r" style="left:282px;top:572px;width:58px;height:13px;overflow:hidden;box-sizing:border-box;background:#fff;border-right:1px solid #c8c8c8;"><div class="d" style="left:3px;top:5px;">0</div></div>
<div class="r" style="left:340px;top:572px;width:58px;height:13px;overflow:hidden;box-sizing:border-box;background:#fff;border-right:1px solid #c8c8c8;"><div class="d" style="left:3px;top:5px;">0</div></div>
<div class="r" style="left:398px;top:572px;width:58px;height:13px;overflow:hidden;box-sizing:border-box;background:#fff;border-right:1px solid #c8c8c8;"><div class="d" style="left:3px;top:5px;">3 cm x 3...</div></div>
<div class="r" style="left:456px;top:572px;width:58px;height:13px;overflow:hidden;box-sizing:border-box;background:#fff;border-right:1px solid #c8c8c8;"><div class="d" style="left:3px;top:5px;">Metal k...</div></div>
<div class="r" style="left:514px;top:572px;width:58px;height:13px;overflow:hidden;box-sizing:border-box;background:#fff;border-right:1px solid #c8c8c8;"><div class="d" style="left:3px;top:5px;">1</div></div>
<div class="r" style="left:573px;top:457px;width:17px;height:128px;background:#f0f0f0;"></div>
<div class="r" style="left:574px;top:474px;width:15px;height:87px;background:#cdcdcd;"></div>
<svg class="r" style="left:573px;top:457px" width="17" height="128"><path d="M5.2 11.5 L8.5 7.5 L11.8 11.5" stroke="#606060" stroke-width="2" fill="none"/><path d="M5.2 117 L8.5 121 L11.8 117" stroke="#606060" stroke-width="2" fill="none"/></svg>
<div class="r" style="left:33px;top:592px;width:118px;height:21px;background:#e1e1e1;border:1px solid #adadad;box-sizing:border-box;"></div>
<div class="g" style="left:33px;width:118px;text-align:center;top:596px;">Ekle</div>
<div class="r" style="left:161px;top:592px;width:118px;height:21px;background:#e1e1e1;border:1px solid #adadad;box-sizing:border-box;"></div>
<div class="g" style="left:161px;width:118px;text-align:center;top:596px;">Kopya</div>
<div class="r" style="left:288px;top:592px;width:118px;height:21px;background:#e1e1e1;border:1px solid #adadad;box-sizing:border-box;"></div>
<div class="g" style="left:288px;width:118px;text-align:center;top:596px;">Sil</div>
<div class="r" style="left:416px;top:592px;width:118px;height:21px;background:#e1e1e1;border:1px solid #adadad;box-sizing:border-box;"></div>
<div class="g" style="left:416px;width:118px;text-align:center;top:596px;">Sırala</div>
<div class="g" style="left:610px;top:435px;letter-spacing:-0.5px;">korkuluk tip 18.rlg</div>
<div class="r" style="left:610px;top:461px;width:379px;height:162px;background:#f5f5f5;"></div>
<svg class="r" style="left:612px;top:463px" width="377" height="160" viewBox="612 463 377 160"><rect x="612" y="463" width="377" height="160" fill="#f5f5f5"/><g stroke="#a6aca9" stroke-width="1" shape-rendering="crispEdges"><line x1="688.73" y1="511.51" x2="-558.90" y2="640"/><line x1="699.91" y1="511.51" x2="-422.96" y2="640"/><line x1="711.08" y1="511.51" x2="-287.02" y2="640"/><line x1="722.26" y1="511.51" x2="-151.08" y2="640"/><line x1="733.44" y1="511.51" x2="-15.14" y2="640"/><line x1="744.62" y1="511.51" x2="120.80" y2="640"/><line x1="755.79" y1="511.51" x2="256.74" y2="640"/><line x1="766.97" y1="511.51" x2="392.68" y2="640"/><line x1="778.15" y1="511.51" x2="528.62" y2="640"/><line x1="789.32" y1="511.51" x2="664.56" y2="640"/><line x1="800.50" y1="511.51" x2="800.50" y2="640"/><line x1="811.68" y1="511.51" x2="936.44" y2="640"/><line x1="822.85" y1="511.51" x2="1072.38" y2="640"/><line x1="834.03" y1="511.51" x2="1208.32" y2="640"/><line x1="845.21" y1="511.51" x2="1344.26" y2="640"/><line x1="856.38" y1="511.51" x2="1480.20" y2="640"/><line x1="867.56" y1="511.51" x2="1616.14" y2="640"/><line x1="878.74" y1="511.51" x2="1752.08" y2="640"/><line x1="889.92" y1="511.51" x2="1888.02" y2="640"/><line x1="901.09" y1="511.51" x2="2023.96" y2="640"/><line x1="912.27" y1="511.51" x2="2159.90" y2="640"/></g><g stroke-width="1" shape-rendering="crispEdges"><line x1="23.70" y1="580.50" x2="1577.30" y2="580.50" stroke="#a9afac"/><line x1="313.48" y1="550.50" x2="1287.52" y2="550.50" stroke="#a9afac"/><line x1="445.80" y1="536.50" x2="1155.20" y2="536.50" stroke="#a9afac"/><line x1="521.58" y1="528.50" x2="1079.42" y2="528.50" stroke="#a9afac"/><line x1="570.68" y1="523.50" x2="1030.32" y2="523.50" stroke="#a9afac"/><line x1="605.08" y1="520.50" x2="995.92" y2="520.50" stroke="#bfc3c0"/><line x1="630.52" y1="517.50" x2="970.48" y2="517.50" stroke="#bfc3c0"/><line x1="650.10" y1="515.50" x2="950.90" y2="515.50" stroke="#bfc3c0"/><line x1="665.64" y1="513.50" x2="935.36" y2="513.50" stroke="#bfc3c0"/><line x1="678.27" y1="512.50" x2="922.73" y2="512.50" stroke="#bfc3c0"/><line x1="688.73" y1="511.50" x2="912.27" y2="511.50" stroke="#bfc3c0"/></g>
<rect x="750" y="495" width="101" height="3" fill="#7b7b7b"/>
<rect x="750" y="498" width="101" height="3" fill="#888"/>
<polygon points="756.5,516 845,516 842.8,553.5 760.2,553.5" fill="#878787"/>
<rect x="756.5" y="516" width="88.5" height="1.2" fill="#111"/>
<rect x="756.7" y="517.2" width="88" height="3" fill="#6c6c6c"/>
<rect x="758" y="534" width="86" height="1.5" fill="#555"/>
<rect x="758" y="535.5" width="86" height="2" fill="#6e6e6e"/>
<rect x="760" y="551" width="83" height="1" fill="#555"/>
<rect x="760" y="552" width="83" height="1.6" fill="#111"/>
<rect x="761" y="565" width="80" height="1.2" fill="#111"/>
<rect x="761" y="566.2" width="80" height="1.6" fill="#8a8a8a"/>
<rect x="761" y="567.8" width="80" height="1.4" fill="#111"/>
<polygon points="749.5,497 755,497 763.5,581.5 759,581.5" fill="#848484" stroke="#1a1a1a" stroke-width="1" stroke-dasharray="3,1"/>
<polygon points="846,497 851.5,497 842,581.5 837.5,581.5" fill="#848484" stroke="#1a1a1a" stroke-width="1" stroke-dasharray="3,1"/>
<line x1="788" y1="543.5" x2="813" y2="543.5" stroke="#6a6aff" stroke-width="1"/>
<line x1="800.5" y1="543" x2="800.5" y2="547.5" stroke="#0000ee" stroke-width="1.5"/>
<line x1="789" y1="577.5" x2="812" y2="577.5" stroke="#888" stroke-width="1"/>
<line x1="800.5" y1="571" x2="800.5" y2="584" stroke="#111" stroke-width="1.3"/>
<text x="829" y="613" font-family="Liberation Sans" font-size="12" fill="#2f3f3f" letter-spacing="0.12">Tam ekran için çift tıklayın.</text></svg>
<div class="r" style="left:610px;top:461px;width:379px;height:162px;border-left:2px solid #7a7a7a;border-top:2px solid #7a7a7a;box-sizing:border-box;"></div>
<div class="r" style="left:612px;top:463px;width:377px;height:160px;border:2px solid #0f0f28;box-sizing:border-box;"></div>
<div class="r" style="left:614px;top:465px;width:373px;height:156px;border:1px solid #fff;box-sizing:border-box;"></div>
<div class="r" style="left:24px;top:638px;width:178px;height:21px;background:#e1e1e1;border:1px solid #adadad;box-sizing:border-box;"></div>
<div class="g" style="left:24px;width:178px;text-align:center;top:642px;">Arşivden Profil Yükle</div>
<div class="r" style="left:215px;top:638px;width:178px;height:21px;background:#e1e1e1;border:1px solid #adadad;box-sizing:border-box;"></div>
<div class="g" style="left:215px;width:178px;text-align:center;top:642px;">Arşivden Korkuluk Yükle</div>
<div class="r" style="left:405px;top:638px;width:178px;height:21px;background:#e1e1e1;border:1px solid #adadad;box-sizing:border-box;"></div>
<div class="g" style="left:405px;width:178px;text-align:center;top:642px;">Arşive Korkuluk Kaydet</div>
<div class="r" style="left:611px;top:638px;width:148px;height:21px;background:#e1e1e1;border:1px solid #adadad;box-sizing:border-box;"></div>
<div class="g" style="left:611px;width:148px;text-align:center;top:642px;">Korkuluğu Sıfırla</div>
<div class="r" style="left:768px;top:638px;width:148px;height:21px;background:#e1e1e1;border:1px solid #adadad;box-sizing:border-box;"></div>
<div class="g" style="left:768px;width:148px;text-align:center;top:642px;">Seçimi Temizle</div>
<div class="r" style="left:850px;top:705px;width:73px;height:21px;background:#e1e1e1;border:2px solid #0078d7;box-sizing:border-box;"></div>
<div class="g" style="left:850px;width:73px;text-align:center;top:709px;">Tamam</div>
<div class="r" style="left:931px;top:705px;width:73px;height:21px;background:#e1e1e1;border:1px solid #adadad;box-sizing:border-box;"></div>
<div class="g" style="left:931px;width:73px;text-align:center;top:709px;">İptal</div>
</body></html>
